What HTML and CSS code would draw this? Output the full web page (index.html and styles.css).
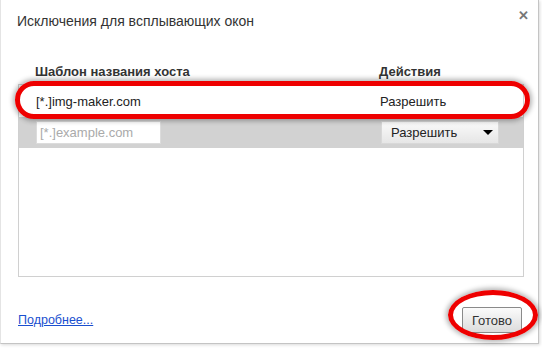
FILE: index.html
```html
<!DOCTYPE html>
<html>
<head>
<meta charset="utf-8">
<link rel="stylesheet" href="styles.css">
</head>
<body>
<div class="dialog">
  <div class="title-bar">
    <div class="title">Исключения для всплывающих окон</div>
    <div class="close">✕</div>
  </div>
  <div class="content">
    <div class="col-headers">
      <div class="col-pattern">Шаблон названия хоста</div>
      <div class="col-action">Действия</div>
    </div>
    <div class="list">
      <div class="row">
        <div class="col-pattern">[*.]img-maker.com</div>
        <div class="col-action">Разрешить</div>
      </div>
      <div class="row row-new">
        <div class="col-pattern"><div class="input">[*.]example.com</div></div>
        <div class="col-action"><div class="select"><span>Разрешить</span><span class="arrow"></span></div></div>
      </div>
    </div>
  </div>
  <div class="footer">
    <a class="link" href="#">Подробнее...</a>
    <button class="btn">Готово</button>
  </div>
  <div class="mark mark-row"></div>
  <div class="mark mark-btn"></div>
</div>
</body>
</html>
```
FILE: styles.css
```css
html, body {
  margin: 0;
  padding: 0;
  background: #fff;
}
body {
  font-family: "Liberation Sans", Arial, sans-serif;
  color: #222;
  width: 542px;
  height: 348px;
  overflow: hidden;
}
.dialog {
  position: relative;
  width: 539px;
  height: 344px;
  box-sizing: border-box;
  background: #fff;
  border-left: 1px solid #e4e4e4;
  border-right: 1px solid #c4c4c4;
  border-bottom: 1px solid #c4c4c4;
  box-shadow: 1px 1px 3px rgba(0,0,0,0.15);
  display: flex;
  flex-direction: column;
}
.title-bar {
  display: flex;
  justify-content: space-between;
  padding: 11px 9px 0 16px;
  height: 20px;
}
.title {
  font-size: 14px;
  line-height: 20px;
  color: #333;
}
.close {
  font-size: 13px;
  font-weight: bold;
  color: #777;
  line-height: 14px;
  margin-top: -2px;
}
.content {
  margin: 33px 14px 0 17px;
}
.col-headers {
  display: flex;
  font-size: 13px;
  font-weight: bold;
  line-height: 16px;
  color: #333;
  height: 16px;
  margin-bottom: 4px;
}
.col-pattern {
  width: 361px;
  padding-left: 17px;
  box-sizing: border-box;
}
.col-action {
  flex: 1;
}
.list {
  border: 1px solid #d0d0d0;
  height: 191px;
}
.row {
  display: flex;
  align-items: center;
  height: 31px;
  font-size: 13px;
  color: #222;
  margin-top: 1px;
}
.row-new {
  background: #d2d2d2;
  margin-top: 0;
}
.input {
  width: 125px;
  height: 23px;
  background: #fff;
  border: 1px solid #dcdcdc;
  box-sizing: border-box;
  color: #aaa;
  font-size: 13px;
  line-height: 21px;
  padding-left: 3px;
}
.select {
  width: 118px;
  height: 23px;
  margin-left: 1px;
  box-sizing: border-box;
  border: 1px solid #d8d8d8;
  background: linear-gradient(#fafafa, #e6e6e6);
  display: flex;
  align-items: center;
  justify-content: space-between;
  padding: 0 5px 0 9px;
  font-size: 13px;
  color: #222;
}
.arrow {
  width: 0;
  height: 0;
  border-left: 5px solid transparent;
  border-right: 5px solid transparent;
  border-top: 5px solid #000;
}
.footer {
  display: flex;
  justify-content: space-between;
  align-items: center;
  padding: 30px 16px 0 17px;
}
.link {
  color: #1a4fcf;
  font-size: 12.5px;
  text-decoration: underline;
}
.btn {
  width: 60px;
  height: 26px;
  border: 1px solid #8a8a8a;
  border-radius: 2px;
  background: linear-gradient(#fbfbfb, #dcdcdc);
  font-family: "Liberation Sans", Arial, sans-serif;
  font-size: 13px;
  color: #333;
  padding: 0;
}
.mark {
  position: absolute;
  border: 5px solid #ee0000;
  box-sizing: border-box;
  box-shadow: 0 0 5px 2px rgba(0,0,0,0.3);
}
.mark-row {
  left: 14px;
  top: 81px;
  width: 515px;
  height: 38px;
  border-radius: 19px;
}
.mark-btn {
  left: 447px;
  top: 290px;
  width: 90px;
  height: 50px;
  border-radius: 50%;
}
```
